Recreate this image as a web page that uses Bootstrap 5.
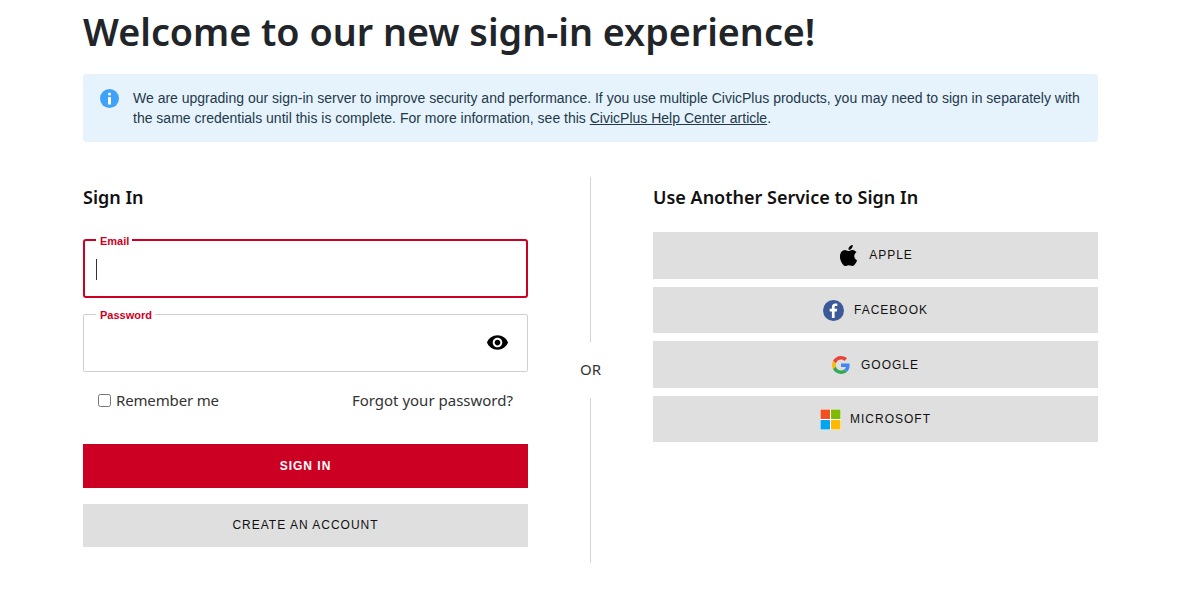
<!DOCTYPE html>
<html lang="en">

<head>
    <meta charset="UTF-8" />
    <meta name="viewport" content="width=device-width, initial-scale=1" />
    <title>Sign In</title>
    <link href="https://cdn.jsdelivr.net/npm/bootstrap@5.3.3/dist/css/bootstrap.min.css" rel="stylesheet" />
    <style>
        body {
            font-family: "Noto Sans", sans-serif;
            color: #212529;
            background: #fff;
        }

        .pagina {
            width: 1015px;
            margin-left: 83px;
            padding-top: 8px;
        }

        .titulo {
            font-size: 37.7px;
            font-weight: 600;
            line-height: 48px;
            margin: 0 0 18px;
        }

        .aviso {
            background: #e6f3fd;
            border-radius: 4px;
            height: 68px;
            padding: 14px 16px 0 17px;
            font-family: "Liberation Sans", sans-serif;
            font-size: 14px;
            line-height: 20px;
            color: #23394a;
            margin-bottom: 35px;
        }

        .aviso a {
            color: #23394a;
        }

        .aviso svg {
            flex: none;
            margin: 1px 14px 0 0;
        }

        .columna {
            width: 445px;
            flex: none;
        }

        .subtitulo {
            font-size: 18px;
            font-weight: 600;
            line-height: 24px;
            color: #111;
            margin: 8px 0 0;
        }

        .caja {
            position: relative;
            height: 58px;
            border: 1px solid #ccd0d5;
            border-radius: 2px;
            padding: 0 12px;
        }

        .etiqueta {
            position: absolute;
            left: 12px;
            top: -6px;
            padding: 0 3px 0 4px;
            background: #fff;
            font-family: "Liberation Sans", sans-serif;
            font-size: 11px;
            font-weight: 700;
            line-height: 13px;
            color: #cc0022;
        }

        .caja input {
            border: 0;
            outline: 0;
            width: 100%;
            height: 100%;
            background: transparent;
        }

        .caja-activa {
            height: 59px;
            border: 2px solid #cc0022;
            border-radius: 3px;
            margin-top: 30px;
            padding: 0 11px;
        }

        .caja-activa .etiqueta {
            left: 11px;
        }

        .cursor {
            position: absolute;
            left: 11px;
            top: 18px;
            width: 1px;
            height: 21px;
            background: #333;
        }

        .ojo {
            position: absolute;
            right: 18px;
            top: 16px;
        }

        .opciones {
            padding: 0 15px 16px;
            height: 72px;
            font-size: 15px;
            color: #333;
        }

        .opciones label {
            letter-spacing: -.15px;
        }

        .opciones input {
            width: 13px;
            height: 13px;
            margin: 0 5px 0 0;
        }

        .boton {
            display: flex;
            align-items: center;
            justify-content: center;
            gap: 10px;
            border: 0;
            border-radius: 0;
            width: 100%;
            font-family: "Liberation Sans", sans-serif;
            font-size: 12px;
            letter-spacing: 1px;
            color: #111;
            background: #dfdfdf;
        }

        .boton:hover {
            background: #dfdfdf;
            color: #111;
        }

        .boton-rojo,
        .boton-rojo:hover {
            background: #cc0022;
            color: #fff;
            font-weight: 700;
            height: 44px;
            margin-bottom: 16px;
        }

        .boton-gris {
            height: 43px;
            padding-bottom: 8px;
        }

        .boton-alto {
            height: 47px;
        }

        .boton-alto:first-child {
            padding-bottom: 8px;
        }

        .boton-bajo {
            height: 46px;
        }

        .icono-apple {
            margin-top: 2px;
        }

        .icono-g {
            margin-right: 1px;
        }

        .icono-ms {
            margin-right: -1px;
        }

        .divisor {
            width: 125px;
            height: 386px;
            flex: none;
        }

        .raya {
            flex: 1;
            width: 1px;
            background: #d5d5d5;
        }

        .separa-o {
            height: 56px;
            line-height: 54px;
            font-size: 15px;
            color: #333;
        }

        .lista-red {
            margin-top: 23px;
        }
    </style>
</head>

<body>
    <div class="pagina">
        <h1 class="titulo">Welcome to our new sign-in experience!</h1>

        <div class="aviso d-flex">
            <svg width="19" height="19" viewBox="0 0 19 19">
                <circle cx="9.5" cy="9.5" r="9.5" fill="#3ea2f8" />
                <circle cx="9.5" cy="5" r="1.5" fill="#fff" />
                <rect x="8" y="8" width="3" height="7.5" fill="#fff" />
            </svg>
            <div>We are upgrading our sign-in server to improve security and performance. If you use multiple CivicPlus products, you may need to sign in separately with the same credentials until this is complete. For more information, see this <a href="#">CivicPlus Help Center article</a>.</div>
        </div>

        <div class="d-flex">
            <!-- Formulario -->
            <div class="columna">
                <h2 class="subtitulo">Sign In</h2>
                <div class="caja caja-activa">
                    <span class="etiqueta">Email</span>
                    <input type="text" aria-label="Email" />
                    <span class="cursor"></span>
                </div>
                <div class="caja mt-3">
                    <span class="etiqueta">Password</span>
                    <input type="password" aria-label="Password" />
                    <svg class="ojo" width="23" height="23" viewBox="0 0 24 24">
                        <path d="M12 4.5C7 4.5 2.73 7.61 1 12c1.73 4.39 6 7.5 11 7.5s9.27-3.11 11-7.5c-1.73-4.39-6-7.5-11-7.5zM12 17c-2.76 0-5-2.24-5-5s2.24-5 5-5 5 2.24 5 5-2.24 5-5 5zm0-8c-1.66 0-3 1.34-3 3s1.34 3 3 3 3-1.34 3-3-1.34-3-3-3z" />
                    </svg>
                </div>
                <div class="opciones d-flex justify-content-between align-items-center">
                    <label class="d-flex align-items-center"><input type="checkbox" />Remember me</label>
                    <span>Forgot your password?</span>
                </div>
                <button class="btn boton boton-rojo">SIGN IN</button>
                <button class="btn boton boton-gris">CREATE AN ACCOUNT</button>
            </div>

            <div class="divisor d-flex flex-column align-items-center">
                <div class="raya"></div>
                <div class="separa-o">OR</div>
                <div class="raya"></div>
            </div>

            <!-- Otros servicios -->
            <div class="columna">
                <h2 class="subtitulo">Use Another Service to Sign In</h2>
                <div class="lista-red d-flex flex-column gap-2">
                    <button class="btn boton boton-alto">
                        <svg class="icono-apple" width="21" height="21" viewBox="0 0 16 16">
                            <path d="M11.182.008C11.148-.03 9.923.023 8.857 1.18c-1.066 1.156-.902 2.482-.878 2.516.024.034 1.52.087 2.475-1.258.955-1.345.762-2.391.728-2.43Zm3.314 11.733c-.048-.096-2.325-1.234-2.113-3.422.212-2.189 1.675-2.789 1.698-2.854.023-.065-.597-.79-1.254-1.157a3.692 3.692 0 0 0-1.563-.434c-.108-.003-.483-.095-1.254.116-.508.139-1.653.589-1.968.607-.316.018-1.256-.522-2.267-.665-.647-.125-1.333.131-1.824.328-.49.196-1.422.754-2.074 2.237-.652 1.482-.311 3.83-.067 4.56.244.729.625 1.924 1.273 2.796.576.984 1.34 1.667 1.659 1.899.319.232 1.219.386 1.843.067.502-.308 1.408-.485 1.766-.472.357.013 1.061.154 1.782.539.571.197 1.111.115 1.652-.105.541-.221 1.324-1.059 2.238-2.758.347-.79.505-1.217.473-1.282Z" />
                        </svg>
                        APPLE
                    </button>
                    <button class="btn boton boton-bajo">
                        <svg width="21" height="21" viewBox="0 0 21 21">
                            <circle cx="10.5" cy="10.5" r="10.5" fill="#3b5998" />
                            <path d="M11.6 18v-6.6h2.2l.4-2.6h-2.6V7.2c0-.8.3-1.2 1.3-1.2h1.4V3.7c-.4 0-1.2-.1-2-.1-2.1 0-3.4 1.2-3.4 3.4v1.8H6.7v2.6h2.2V18z" fill="#fff" />
                        </svg>
                        FACEBOOK
                    </button>
                    <button class="btn boton boton-alto">
                        <svg class="icono-g" width="18" height="18" viewBox="0 0 48 48">
                            <path fill="#EA4335" d="M24 9.5c3.54 0 6.71 1.22 9.21 3.6l6.85-6.85C35.9 2.38 30.47 0 24 0 14.62 0 6.51 5.38 2.56 13.22l7.98 6.19C12.43 13.72 17.74 9.5 24 9.5z" />
                            <path fill="#4285F4" d="M46.98 24.55c0-1.57-.15-3.09-.38-4.55H24v9.02h12.94c-.58 2.96-2.26 5.48-4.78 7.18l7.73 6c4.51-4.18 7.09-10.36 7.09-17.65z" />
                            <path fill="#FBBC05" d="M10.53 28.59c-.48-1.45-.76-2.99-.76-4.59s.27-3.14.76-4.59l-7.98-6.19C.92 16.46 0 20.12 0 24c0 3.88.92 7.54 2.56 10.78l7.97-6.19z" />
                            <path fill="#34A853" d="M24 48c6.48 0 11.93-2.13 15.89-5.81l-7.73-6c-2.15 1.45-4.92 2.3-8.16 2.3-6.26 0-11.57-4.22-13.47-9.91l-7.98 6.19C6.51 42.62 14.62 48 24 48z" />
                        </svg>
                        GOOGLE
                    </button>
                    <button class="btn boton boton-bajo">
                        <svg class="icono-ms" width="21" height="21" viewBox="0 0 20 20">
                            <rect width="20" height="20" fill="#fff" />
                            <rect x=".5" y=".5" width="9" height="9" fill="#f25022" />
                            <rect x="10.5" y=".5" width="9" height="9" fill="#7fba00" />
                            <rect x=".5" y="10.5" width="9" height="9" fill="#00a4ef" />
                            <rect x="10.5" y="10.5" width="9" height="9" fill="#ffb900" />
                        </svg>
                        MICROSOFT
                    </button>
                </div>
            </div>
        </div>
    </div>

    <script src="https://cdn.jsdelivr.net/npm/bootstrap@5.3.3/dist/js/bootstrap.bundle.min.js"></script>
</body>

</html>
